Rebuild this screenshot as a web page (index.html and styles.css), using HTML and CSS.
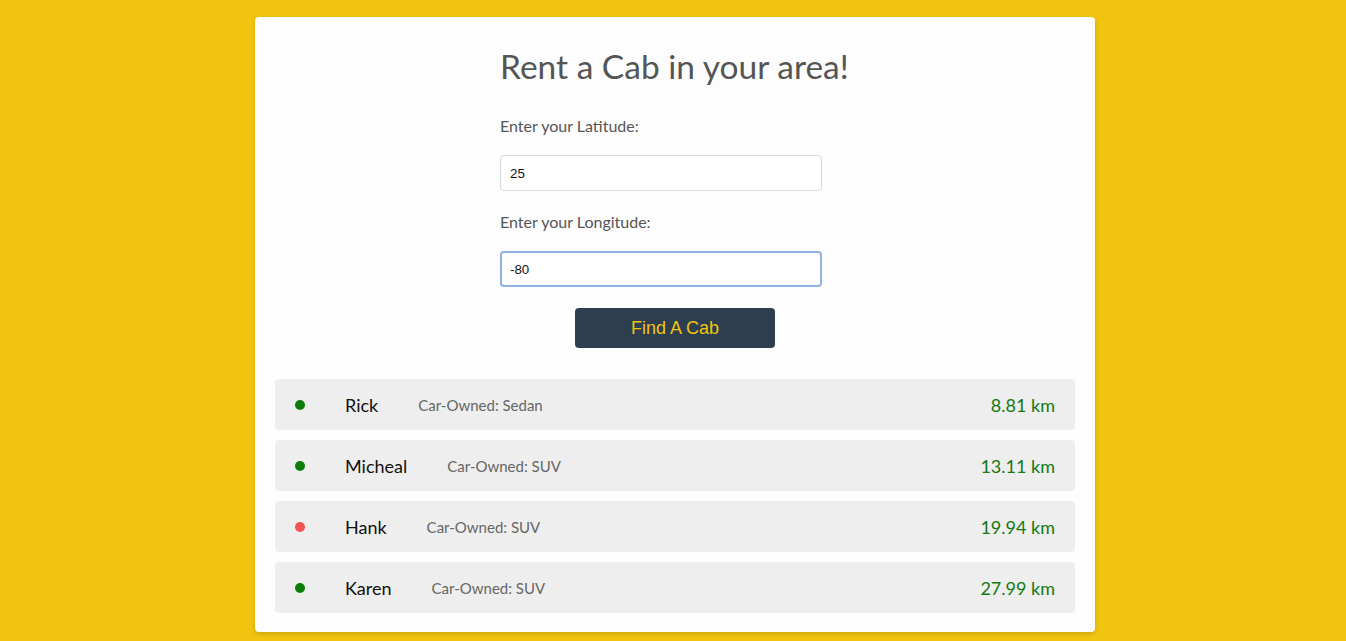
FILE: index.html
```html
<!DOCTYPE html>
<html lang="en">
<head>
<meta charset="utf-8">
<title>Rent a Cab</title>
<link rel="stylesheet" href="styles.css">
</head>
<body>
<main class="card">
  <section class="form">
    <h1 class="title">Rent a Cab in your area!</h1>
    <label class="label" for="lat">Enter your Latitude:</label>
    <input class="field" id="lat" type="text" value="25">
    <label class="label" for="lng">Enter your Longitude:</label>
    <input class="field field-focus" id="lng" type="text" value="-80">
  </section>
  <div class="actions">
    <button class="btn" type="button">Find A Cab</button>
  </div>
  <ul class="list">
    <li class="row">
      <span class="dot dot-on"></span>
      <span class="name">Rick</span>
      <span class="car">Car-Owned: Sedan</span>
      <span class="dist">8.81 km</span>
    </li>
    <li class="row">
      <span class="dot dot-on"></span>
      <span class="name">Micheal</span>
      <span class="car">Car-Owned: SUV</span>
      <span class="dist">13.11 km</span>
    </li>
    <li class="row">
      <span class="dot dot-off"></span>
      <span class="name">Hank</span>
      <span class="car">Car-Owned: SUV</span>
      <span class="dist">19.94 km</span>
    </li>
    <li class="row">
      <span class="dot dot-on"></span>
      <span class="name">Karen</span>
      <span class="car">Car-Owned: SUV</span>
      <span class="dist">27.99 km</span>
    </li>
  </ul>
</main>
</body>
</html>
```
FILE: styles.css
```css
* { box-sizing: border-box; }
html, body { margin: 0; height: 100%; }
body {
  background: #f1c40f;
  font-family: "Lato", "Open Sans", sans-serif;
  color: #555;
  padding: 17px 0 0 4px;
  display: flex;
  justify-content: center;
  align-items: flex-start;
}
.card {
  width: 840px;
  background: #fdfdfd;
  border-radius: 4px;
  padding: 27px 20px 19px;
  box-shadow: 0 2px 4px rgba(0,0,0,0.15);
}
.form {
  width: 350px;
  margin: 0 auto;
  display: flex;
  flex-direction: column;
  align-items: flex-start;
}
.title {
  font-size: 33.5px;
  font-weight: 400;
  color: #555;
  margin: 0 0 28px;
  line-height: 44px;
}
.label {
  font-size: 16px;
  line-height: 20px;
  color: #555;
  margin-bottom: 19px;
}
.field {
  width: 322px;
  height: 36px;
  border: 1px solid #d9d9d9;
  border-radius: 4px;
  padding: 0 9px;
  font-family: "Liberation Sans", Arial, sans-serif;
  font-size: 13.33px;
  color: #111;
  background: #fff;
  margin-bottom: 21px;
  outline: none;
}
.field-focus {
  border: 2px solid #8fb1e3;
  padding: 0 8px;
  margin-bottom: 21px;
}
.actions {
  display: flex;
  justify-content: center;
}
.btn {
  width: 200px;
  height: 40px;
  border: none;
  border-radius: 4px;
  background: #2c3e50;
  color: #f1c40f;
  font-family: "Liberation Sans", Arial, sans-serif;
  font-size: 18px;
  cursor: pointer;
}
.list {
  list-style: none;
  margin: 31px 0 0;
  padding: 0;
  display: flex;
  flex-direction: column;
  gap: 10px;
}
.row {
  height: 51px;
  background: #eeeeee;
  border-radius: 4px;
  display: flex;
  align-items: center;
  padding: 0 20px;
}
.dot {
  width: 10px;
  height: 10px;
  border-radius: 50%;
  margin-right: 40px;
}
.dot-on { background: #0a7d0a; }
.dot-off { background: #f05454; }
.name {
  font-size: 18px;
  color: #111;
  margin-right: 40px;
}
.car {
  font-size: 15px;
  color: #666;
}
.dist {
  margin-left: auto;
  font-size: 18px;
  color: #137a13;
}
```
